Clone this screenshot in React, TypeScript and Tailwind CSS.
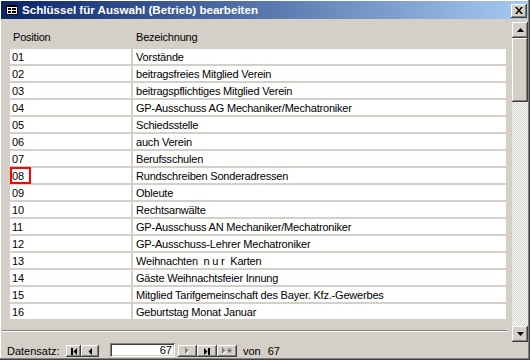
import React from "react";

const rows: [string, string][] = [
  ["01", "Vorstände"],
  ["02", "beitragsfreies Mitglied Verein"],
  ["03", "beitragspflichtiges Mitglied Verein"],
  ["04", "GP-Ausschuss AG Mechaniker/Mechatroniker"],
  ["05", "Schiedsstelle"],
  ["06", "auch Verein"],
  ["07", "Berufsschulen"],
  ["08", "Rundschreiben Sonderadressen"],
  ["09", "Obleute"],
  ["10", "Rechtsanwälte"],
  ["11", "GP-Ausschuss AN Mechaniker/Mechatroniker"],
  ["12", "GP-Ausschuss-Lehrer Mechatroniker"],
  ["13", "Weihnachten  n u r  Karten"],
  ["14", "Gäste Weihnachtsfeier Innung"],
  ["15", "Mitglied Tarifgemeinschaft des Bayer. Kfz.-Gewerbes"],
  ["16", "Geburtstag Monat Januar"],
];

const raised =
  "bg-[#d4d0c8] shadow-[inset_-1px_-1px_#404040,inset_1px_1px_#ffffff,inset_-2px_-2px_#808080,inset_2px_2px_#d4d0c8]";

function NavBtn({ w, children }: { w: string; children: React.ReactNode }) {
  return (
    <div className={`${w} h-[12px] mt-[2px] flex items-center justify-center ${raised}`}>
      {children}
    </div>
  );
}

export default function App() {
  return (
    <div className="w-[530px] h-[360px] bg-[#d4d0c8] pt-[1px] pl-[1px] pr-[2px] pb-[2px] shadow-[inset_-1px_-1px_#404040,inset_-2px_-2px_#808080,inset_1px_1px_#ffffff] flex flex-col font-['Liberation_Sans',Arial,sans-serif] text-[11px] text-black overflow-hidden">
      {/* Title bar */}
      <div className="h-[18px] shrink-0 flex items-center bg-[linear-gradient(to_right,#0a246a,#a6caf0)] pl-[5px] pr-[1px]">
        <svg width="12" height="10" viewBox="0 0 12 10" className="shrink-0">
          <rect x="0.5" y="0.5" width="11" height="9" fill="#ffffff" stroke="#000000" />
          <rect x="1" y="1" width="10" height="1" fill="#000000" />
          <rect x="2" y="3" width="3" height="2" fill="#000000" />
          <rect x="6" y="3" width="4" height="2" fill="#000000" />
          <rect x="2" y="6" width="3" height="2" fill="#000000" />
          <rect x="6" y="6" width="4" height="2" fill="#000000" />
        </svg>
        <span className="ml-[4px] text-white font-bold text-[11.6px] leading-[14px] whitespace-nowrap">
          Schlüssel für Auswahl (Betrieb) bearbeiten
        </span>
        <div className={`ml-auto mt-[1px] w-[16px] h-[14px] flex items-center justify-center ${raised}`}>
          <svg width="8" height="7" viewBox="0 0 8 7">
            <path d="M0 0h2l2 2.5L6 0h2L5 3.5 8 7H6L4 4.5 2 7H0l3-3.5z" fill="#000000" />
          </svg>
        </div>
      </div>

      {/* Body */}
      <div className="flex-1 flex flex-col">
        <div className="flex-1 flex">
          <div className="flex-1 flex flex-col">
            {/* header */}
            <div className="h-[30px] shrink-0 pt-[12px] pl-[9px] pr-[6px] flex gap-[2px] leading-[13px] tracking-[-0.2px]">
              <div className="w-[121px] pl-[3px]">Position</div>
              <div className="flex-1 pl-[3px]">Bezeichnung</div>
            </div>
            {/* rows */}
            <div className="flex flex-col gap-[2px] pl-[9px] pr-[6px] tracking-[-0.2px]">
              {rows.map(([p, b]) => (
                <div key={p} className="h-[15px] flex gap-[2px] leading-[14px]">
                  <div className="w-[121px] bg-white pl-[2px] pt-[1px] relative">
                    {p}
                    {p === "08" && (
                      <div className="absolute left-0 -top-[1px] w-[21px] h-[17px] border-2 border-[#ff0000]" />
                    )}
                  </div>
                  <div className="flex-1 bg-white pl-[3px] pt-[1px] whitespace-pre">{b}</div>
                </div>
              ))}
            </div>
            <div className="flex-1" />
            <div className="ml-[1px] mr-[5px] mb-[11px] h-[2px] border-t border-[#808080] border-b border-b-white" />
          </div>

          {/* Scrollbar */}
          <div className="w-[16px] pt-[3px] pb-[1px] flex flex-col">
            <div className={`h-[16px] flex items-center justify-center ${raised}`}>
              <svg width="7" height="4" viewBox="0 0 7 4">
                <path d="M3.5 0L7 4H0z" fill="#000000" />
              </svg>
            </div>
            <div className={`h-[64px] ${raised}`} />
            <div className="flex-1 bg-[image:repeating-conic-gradient(#ffffff_0%_25%,#d4d0c8_0%_50%)] bg-[length:2px_2px]" />
            <div className={`h-[16px] flex items-center justify-center ${raised}`}>
              <svg width="7" height="4" viewBox="0 0 7 4">
                <path d="M0 0H7L3.5 4z" fill="#000000" />
              </svg>
            </div>
          </div>
        </div>

        {/* Navigation bar */}
        <div className="h-[15px] shrink-0 flex items-start pl-[6px]">
          <span className="w-[59px] mt-[2px] leading-[13px] whitespace-nowrap">Datensatz:</span>
          <NavBtn w="w-[15px]">
            <svg width="6" height="7" viewBox="0 0 6 7">
              <rect x="0" y="0" width="2" height="7" fill="#000" />
              <path d="M6 0V7L2.5 3.5z" fill="#000" />
            </svg>
          </NavBtn>
          <NavBtn w="w-[18px]">
            <svg width="4" height="7" viewBox="0 0 4 7">
              <path d="M4 0V7L0.5 3.5z" fill="#000" />
            </svg>
          </NavBtn>
          <div className="ml-[11px] w-[65px] h-[14px] bg-white shadow-[inset_1px_1px_#808080,inset_-1px_-1px_#ffffff,inset_2px_2px_#404040,inset_-2px_-2px_#d4d0c8] text-right pr-[3px] leading-[15px]">
            67
          </div>
          <NavBtn w="ml-[3px] w-[19px]">
            <svg width="5" height="8" viewBox="0 0 5 8">
              <path d="M1 1V8L4.5 4.5z" fill="#ffffff" />
              <path d="M0 0V7L3.5 3.5z" fill="#808080" />
            </svg>
          </NavBtn>
          <NavBtn w="w-[20px]">
            <svg width="6" height="7" viewBox="0 0 6 7">
              <path d="M0 0V7L3.5 3.5z" fill="#000" />
              <rect x="4" y="0" width="2" height="7" fill="#000" />
            </svg>
          </NavBtn>
          <NavBtn w="w-[20px]">
            <svg width="11" height="8" viewBox="0 0 11 8">
              <path d="M1 1V8L4.5 4.5z" fill="#ffffff" />
              <path d="M0 0V7L3.5 3.5z" fill="#808080" />
              <g stroke="#808080" strokeWidth="1">
                <path d="M7.5 1V6M5 3.5H10M5.7 1.7L9.3 5.3M9.3 1.7L5.7 5.3" />
              </g>
            </svg>
          </NavBtn>
          <span className="ml-[6px] mt-[2px] leading-[13px]">von</span>
          <span className="ml-[7px] mt-[2px] leading-[13px]">67</span>
        </div>
      </div>
    </div>
  );
}
